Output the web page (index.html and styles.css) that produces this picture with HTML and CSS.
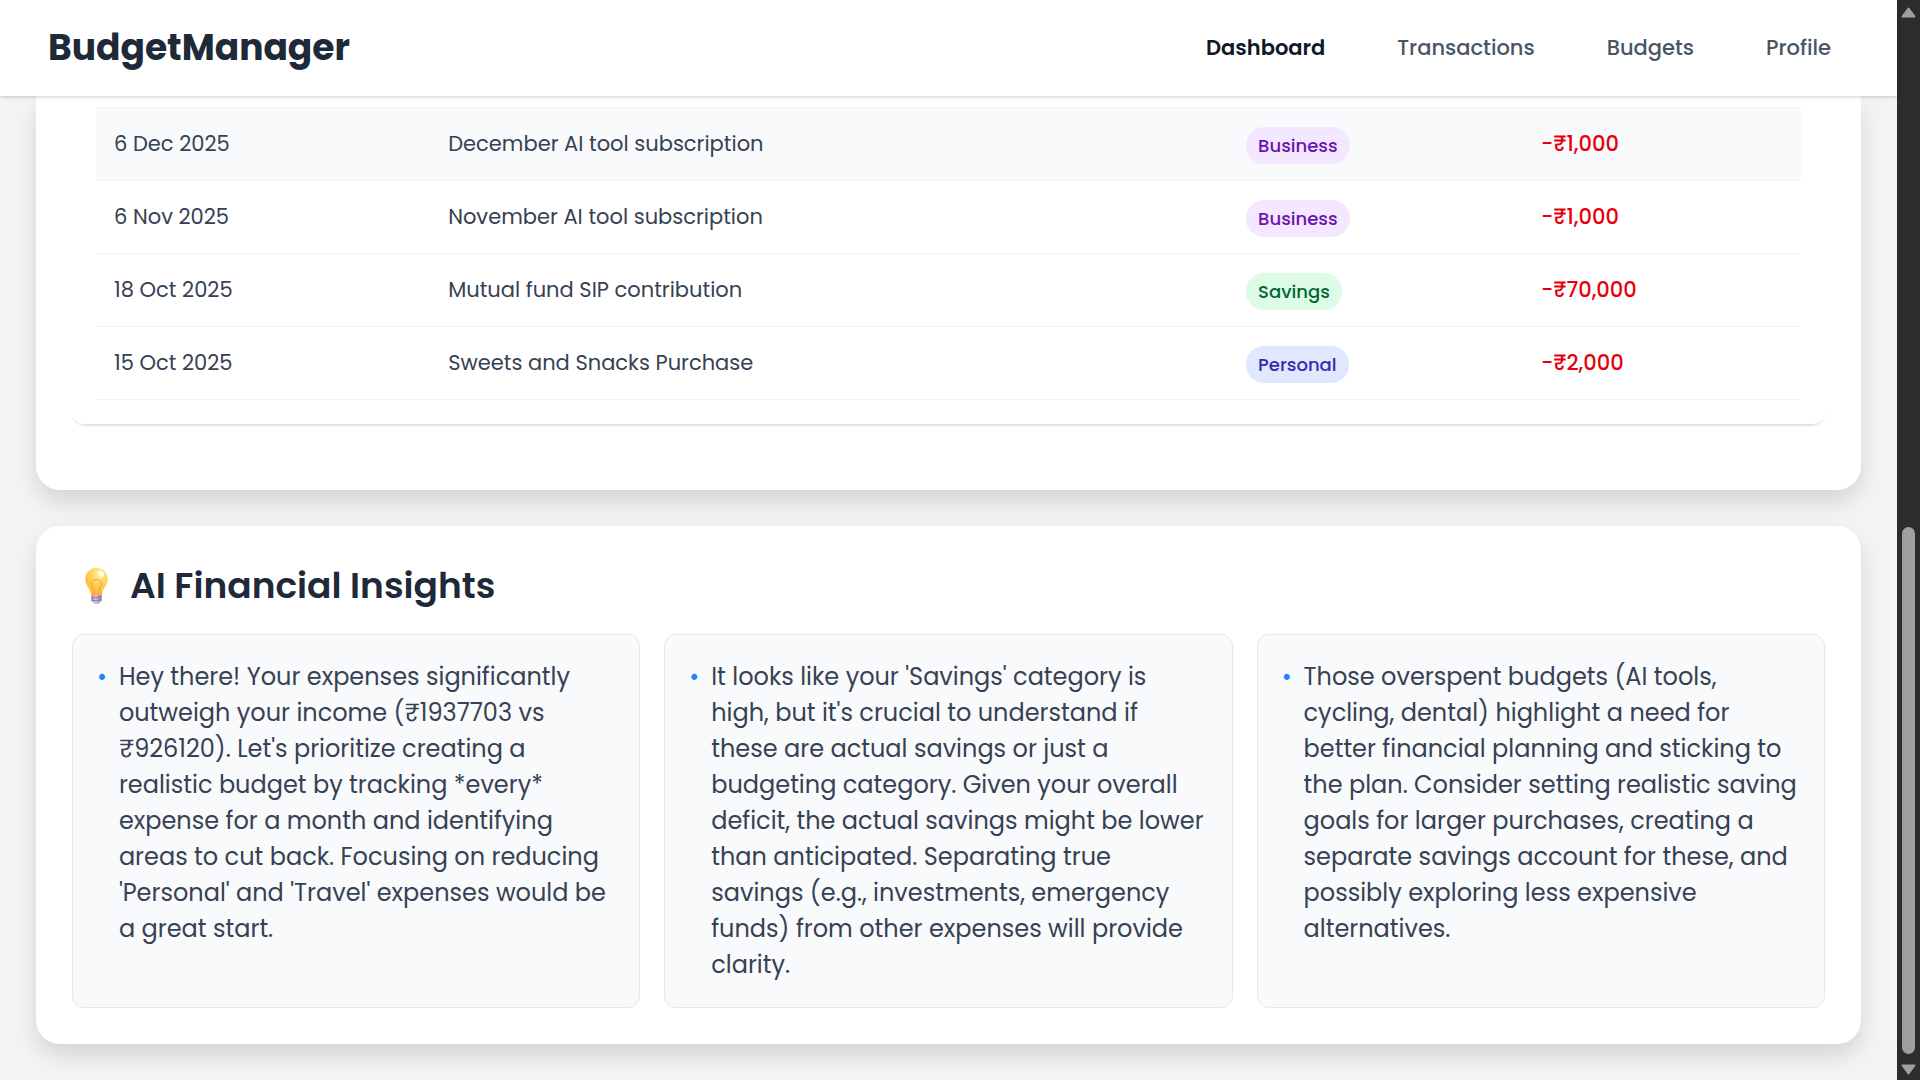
FILE: index.html
```html
<!DOCTYPE html>
<html lang="en">
<head>
<meta charset="utf-8">
<title>BudgetManager</title>
<meta name="viewport" content="width=device-width, initial-scale=1">
<link rel="stylesheet" href="styles.css">
</head>
<body>
<div class="app">
  <div class="view">
    <header class="topbar">
      <a class="brand" href="#">BudgetManager</a>
      <nav class="nav">
        <a class="nav-link active" href="#">Dashboard</a>
        <a class="nav-link" href="#">Transactions</a>
        <a class="nav-link" href="#">Budgets</a>
        <a class="nav-link" href="#">Profile</a>
      </nav>
    </header>
    <main class="content">
      <section class="card card-transactions">
        <div class="panel">
          <table class="transactions">
            <colgroup><col class="col-date"><col class="col-desc"><col class="col-cat"><col class="col-amount"></colgroup>
            <tbody>
              <tr class="hovered"><td>6 Dec 2025</td><td>December AI tool subscription</td><td class="category"><span class="pill business">Business</span></td><td class="amount">-₹1,000</td></tr>
              <tr><td>6 Nov 2025</td><td>November AI tool subscription</td><td class="category"><span class="pill business">Business</span></td><td class="amount">-₹1,000</td></tr>
              <tr><td>18 Oct 2025</td><td>Mutual fund SIP contribution</td><td class="category"><span class="pill savings">Savings</span></td><td class="amount">-₹70,000</td></tr>
              <tr><td>15 Oct 2025</td><td>Sweets and Snacks Purchase</td><td class="category"><span class="pill personal">Personal</span></td><td class="amount">-₹2,000</td></tr>
            </tbody>
          </table>
        </div>
      </section>
      <section class="card card-insights">
        <h2 class="title">
          <svg class="bulb" viewBox="0 0 48 36" aria-hidden="true">
            <defs>
              <radialGradient id="glass" cx="0.62" cy="0.25" r="0.75">
                <stop offset="0" stop-color="#fff3b0"/><stop offset="0.4" stop-color="#ffd95e"/><stop offset="1" stop-color="#fdb52f"/>
              </radialGradient>
              <linearGradient id="cap" x1="0" x2="1" y1="0" y2="0">
                <stop offset="0" stop-color="#9c86a6"/><stop offset="0.4" stop-color="#d6c6da"/><stop offset="1" stop-color="#9377a0"/>
              </linearGradient>
            </defs>
            <path d="M24.500 0C18.100 0 13.300 4.800 13.300 11c0 5 2.900 7.800 4.400 10.800 .9 1.900 1.200 3.600 1.500 5.200h10.600c.3-1.600.6-3.300 1.500-5.200C32.800 18.800 35.700 16 35.700 11 35.700 4.800 30.900 0 24.500 0z" fill="url(#glass)"/>
            <path d="M22.500 27l-1-7c-3.500-3-2.500-8.500 3-8.500s6.500 5.500 3 8.500l-1 7" fill="none" stroke="#f9a544" stroke-width="1.200"/>
            <ellipse cx="29" cy="6" rx="2.600" ry="3.400" transform="rotate(-35 29 6)" fill="#fffdf0"/>
            <path d="M19.300 27h10.400v5c0 1-.8 1.500-1.700 1.700-.5 1.500-1.600 2.300-3.500 2.300s-3-.8-3.500-2.300c-.9-.2-1.700-.7-1.700-1.700z" fill="url(#cap)"/>
            <path d="M19.500 29.900l10-.8M19.500 32.700l10-.8" stroke="#86689a" stroke-width="0.800"/>
          </svg>
          <span>AI Financial Insights</span>
        </h2>
        <ul class="insights">
          <li class="insight"><span class="dot">•</span><p>Hey there! Your expenses significantly outweigh your income (₹1937703 vs ₹926120). Let's prioritize creating a realistic budget by tracking *every* expense for a month and identifying areas to cut back. Focusing on reducing 'Personal' and 'Travel' expenses would be a great start.</p></li>
          <li class="insight"><span class="dot">•</span><p>It looks like your 'Savings' category is high, but it's crucial to understand if these are actual savings or just a budgeting category. Given your overall deficit, the actual savings might be lower than anticipated. Separating true savings (e.g., investments, emergency funds) from other expenses will provide clarity.</p></li>
          <li class="insight"><span class="dot">•</span><p>Those overspent budgets (AI tools, cycling, dental) highlight a need for better financial planning and sticking to the plan. Consider setting realistic saving goals for larger purchases, creating a separate savings account for these, and possibly exploring less expensive alternatives.</p></li>
        </ul>
      </section>
    </main>
  </div>
  <div class="scrollbar" aria-hidden="true">
    <svg class="arrow" viewBox="0 0 15 11"><path d="M7.500 1.500L13.500 9.500H1.500z"/></svg>
    <div class="track"><div class="thumb"></div></div>
    <svg class="arrow" viewBox="0 0 15 11"><path d="M7.500 9.500L13.500 1.500H1.500z"/></svg>
  </div>
</div>
</body>
</html>
```
FILE: styles.css
```css
* { box-sizing: border-box; }

body {
  margin: 0;
  background: #f3f4f6;
  color: #364153;
  font-family: Poppins, Inter, "Noto Sans", sans-serif;
  font-size: 21px;
  line-height: 30px;
}

.app {
  display: grid;
  grid-template-columns: minmax(0, 1fr) 23px;
  min-height: 100vh;
}

.topbar {
  position: sticky;
  top: 0;
  z-index: 10;
  display: flex;
  align-items: center;
  justify-content: space-between;
  padding: 24px 66px 24px 48px;
  background: #fff;
  box-shadow: 0 1px 4px rgba(0, 0, 0, 0.2);
}

.brand {
  color: #1e2939;
  font-size: 36px;
  font-weight: 700;
  line-height: 48px;
  text-decoration: none;
}

.nav { display: flex; gap: 72px; }

.nav-link {
  color: #4a5565;
  font-weight: 500;
  text-decoration: none;
}

.nav-link.active { color: #101828; font-weight: 600; }

.content {
  display: flex;
  flex-direction: column;
  gap: 36px;
  padding: 0 36px 36px;
}

.card {
  padding: 36px;
  background: #fff;
  border-radius: 24px;
  box-shadow: 0 12px 26px -2px rgba(0, 0, 0, 0.15);
}

.card-transactions {
  padding: 0 36px 66px;
  border-radius: 0 0 24px 24px;
}

.panel {
  padding: 11px 24px 24px;
  border-radius: 0 0 12px 12px;
  box-shadow: 0 3px 3px -2px rgba(0, 0, 0, 0.2);
}

.transactions {
  width: 100%;
  border-collapse: collapse;
  table-layout: fixed;
}

.col-date { width: 19.6%; }
.col-desc { width: 46.8%; }
.col-cat { width: 17.3%; }

.transactions td {
  height: 73px;
  padding: 0 18px;
  border-bottom: 1px solid #f3f4f6;
}

.transactions .hovered td {
  border-top: 1px solid #f3f4f6;
  background: #f9fafb;
}

.transactions .category { padding-top: 2px; }

.transactions .amount { color: #e7000b; font-weight: 500; }

.pill {
  display: inline-block;
  padding: 4px 12px;
  border-radius: 18px;
  font-size: 18px;
  font-weight: 500;
  line-height: 29px;
}

.business { background: #f3e8ff; color: #6e11b0; }
.savings { background: #dcfce7; color: #016630; }
.personal { background: #e0e7ff; color: #372aac; }

.title {
  display: flex;
  align-items: center;
  gap: 10px;
  margin: 0 0 24px;
  color: #1e2939;
  font-size: 36px;
  font-weight: 600;
  line-height: 48px;
}

.bulb { width: 48px; height: 36px; }

.insights {
  display: grid;
  grid-template-columns: repeat(3, minmax(0, 1fr));
  gap: 24px;
  margin: 0;
  padding: 0;
  list-style: none;
}

.insight {
  display: flex;
  gap: 12px;
  padding: 24px;
  border: 1px solid #e5e7eb;
  border-radius: 12px;
  background: #f9fafb;
  font-size: 24px;
  line-height: 36px;
}

.insight p { margin: 0; }

.dot { color: #2b7fff; }

.scrollbar {
  position: sticky;
  top: 0;
  display: flex;
  flex-direction: column;
  align-items: center;
  height: 100vh;
  padding: 7px 0 5px;
  background: #2c2c2c;
}

.arrow {
  width: 15px;
  height: 11px;
  fill: #9f9f9f;
  stroke: #9f9f9f;
  stroke-width: 2;
  stroke-linejoin: round;
}

.track {
  display: flex;
  flex: 1;
  flex-direction: column;
  justify-content: flex-end;
  padding: 9px 0 10px;
}

.thumb {
  width: 13px;
  height: 51.3%;
  border-radius: 7px;
  background: #9f9f9f;
}
```
